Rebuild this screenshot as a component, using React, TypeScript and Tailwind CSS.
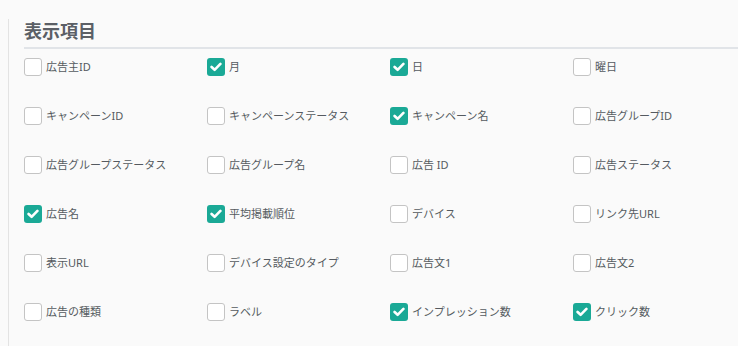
import React from "react";

const items: [string, boolean][] = [
  ["広告主ID", false], ["月", true], ["日", true], ["曜日", false],
  ["キャンペーンID", false], ["キャンペーンステータス", false], ["キャンペーン名", true], ["広告グループID", false],
  ["広告グループステータス", false], ["広告グループ名", false], ["広告 ID", false], ["広告ステータス", false],
  ["広告名", true], ["平均掲載順位", true], ["デバイス", false], ["リンク先URL", false],
  ["表示URL", false], ["デバイス設定のタイプ", false], ["広告文1", false], ["広告文2", false],
  ["広告の種類", false], ["ラベル", false], ["インプレッション数", true], ["クリック数", true],
];

function Box({ checked }: { checked: boolean }) {
  if (checked) {
    return (
      <span className="flex h-[18px] w-[18px] shrink-0 items-center justify-center rounded-[3px] bg-[#1aa996]">
        <svg width="12" height="10" viewBox="0 0 12 10">
          <path d="M1.6 5 L4.6 7.8 L10.4 1.9" fill="none" stroke="#fff" strokeWidth="2.6" strokeLinecap="round" strokeLinejoin="round" />
        </svg>
      </span>
    );
  }
  return <span className="h-[18px] w-[18px] shrink-0 rounded-[3px] border border-[#c4c4c4] bg-white" />;
}

export default function App() {
  return (
    <div className="h-[346px] w-[738px] overflow-hidden bg-[#fafafa] pl-2" style={{ fontFamily: '"Noto Sans", "Noto Sans CJK JP", sans-serif' }}>
      <div className="h-full border-l border-[#e3e3e3] pl-[15px]">
        <h1 className="mt-[19px] text-[18px] font-bold leading-6 text-[#5b5f66]">表示項目</h1>
        <div className="mt-[4px] h-[2px] bg-[#e1e4e8]" />
        <div className="mt-[9px] grid grid-cols-[repeat(4,183px)] gap-y-[31px]">
          {items.map(([label, checked]) => (
            <label key={label} className="flex h-[18px] items-center gap-1">
              <Box checked={checked} />
              <span className="whitespace-nowrap text-[11px] leading-[18px] text-[#555a60]">{label}</span>
            </label>
          ))}
        </div>
      </div>
    </div>
  );
}
